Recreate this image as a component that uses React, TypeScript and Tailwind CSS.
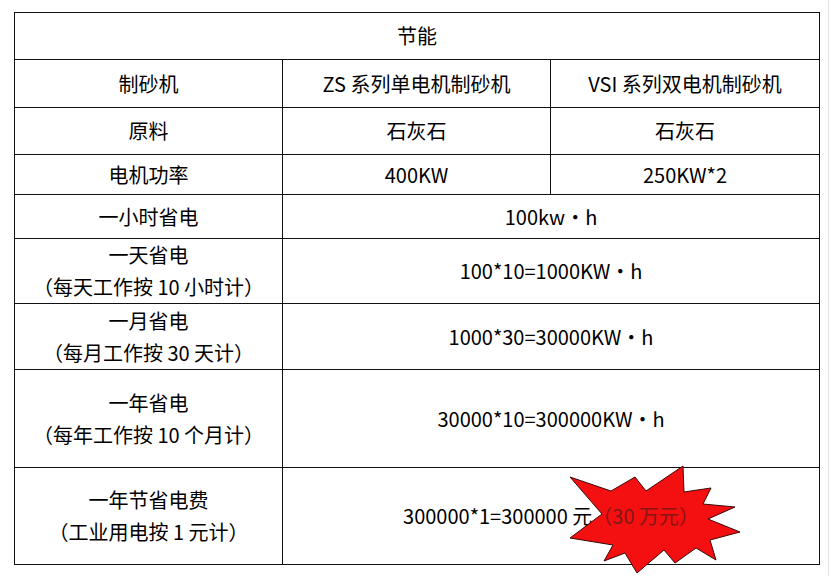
import React from "react";

const font = {
  fontFamily: '"Noto Sans CJK SC", "Noto Sans", sans-serif',
};

const Starburst: React.FC = () => (
  <svg
    className="absolute left-[286px] top-[-4px] z-10"
    width="174"
    height="112"
    viewBox="0 0 174 112"
  >
    <polygon
      points="114,2 115,28 142,24 134,40 166,43 139,55 171,68 141,76 147,96 127,84 106,99 95,86 68,109 56,89 35,97 44,81 1,74 33,50 1,13 42,27 66,13 77,27"
      fill="#f41010"
      stroke="#3b0808"
      strokeWidth="1"
      strokeLinejoin="miter"
    />
  </svg>
);

const cell = "border border-[#111] text-center align-middle p-0";

const App: React.FC = () => {
  return (
    <div className="w-[829px] h-[576px] bg-white border-r border-[#e2e2e2] pt-[12px] pl-[14px]">
      <table
        className="table-fixed border-collapse w-[805px] text-[20px] text-black leading-8"
        style={font}
      >
        <colgroup>
          <col className="w-[268px]" />
          <col className="w-[268px]" />
          <col className="w-[269px]" />
        </colgroup>
        <tbody>
          <tr className="h-[47px]">
            <td colSpan={3} className={cell}>
              节能
            </td>
          </tr>
          <tr className="h-[48px]">
            <td className={cell}>制砂机</td>
            <td className={cell}>ZS 系列单电机制砂机</td>
            <td className={cell}>VSI 系列双电机制砂机</td>
          </tr>
          <tr className="h-[47px]">
            <td className={cell}>原料</td>
            <td className={cell}>石灰石</td>
            <td className={cell}>石灰石</td>
          </tr>
          <tr className="h-[40px]">
            <td className={cell}>电机功率</td>
            <td className={cell}>400KW</td>
            <td className={cell}>250KW*2</td>
          </tr>
          <tr className="h-[44px]">
            <td className={cell}>一小时省电</td>
            <td colSpan={2} className={cell}>
              100kw•h
            </td>
          </tr>
          <tr className="h-[65px]">
            <td className={cell}>
              一天省电
              <br />
              （每天工作按 10 小时计）
            </td>
            <td colSpan={2} className={cell}>
              100*10=1000KW•h
            </td>
          </tr>
          <tr className="h-[66px]">
            <td className={cell}>
              一月省电
              <br />
              （每月工作按 30 天计）
            </td>
            <td colSpan={2} className={cell}>
              1000*30=30000KW•h
            </td>
          </tr>
          <tr className="h-[98px]">
            <td className={cell}>
              一年省电
              <br />
              （每年工作按 10 个月计）
            </td>
            <td colSpan={2} className={cell}>
              30000*10=300000KW•h
            </td>
          </tr>
          <tr className="h-[97px]">
            <td className={cell}>
              一年节省电费
              <br />
              （工业用电按 1 元计）
            </td>
            <td colSpan={2} className={`${cell} relative`}>
              300000*1=300000 元
              <span className="relative z-20 text-[#861515]">（30 万元）</span>
              <Starburst />
            </td>
          </tr>
        </tbody>
      </table>
    </div>
  );
};

export default App;
